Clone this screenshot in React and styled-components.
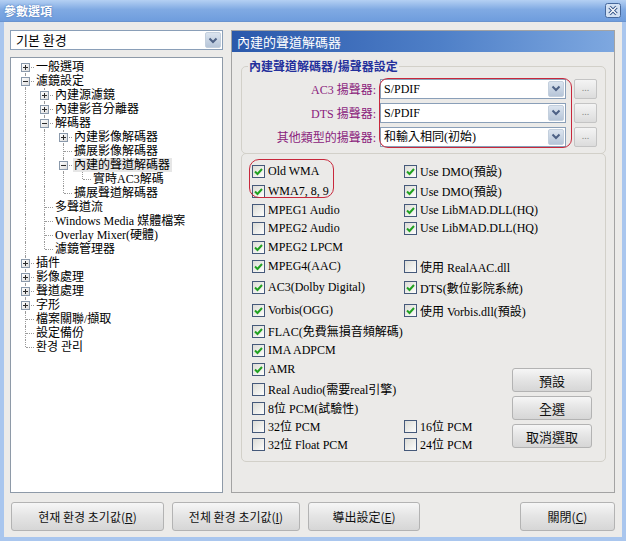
import React from 'react';
import styled, { createGlobalStyle } from 'styled-components';

const GlobalStyle = createGlobalStyle`
  html, body {
    margin: 0;
    padding: 0;
    background: #fff;
  }
  body {
    font-family: "Liberation Serif", "Noto Sans CJK TC", serif;
    font-size: 12px;
    color: #000;
  }
`;

const TREE = [
  { t: '一般選項', d: 0, exp: '+' },
  { t: '濾鏡設定', d: 0, exp: '-' },
  { t: '內建源濾鏡', d: 1, exp: '+' },
  { t: '內建影音分離器', d: 1, exp: '+' },
  { t: '解碼器', d: 1, exp: '-' },
  { t: '內建影像解碼器', d: 2, exp: '+' },
  { t: '擴展影像解碼器', d: 2 },
  { t: '內建的聲道解碼器', d: 2, exp: '-', sel: true },
  { t: '實時AC3解碼', d: 3 },
  { t: '擴展聲道解碼器', d: 2 },
  { t: '多聲道流', d: 1 },
  { t: 'Windows Media 媒體檔案', d: 1 },
  { t: 'Overlay Mixer(硬體)', d: 1 },
  { t: '濾鏡管理器', d: 1 },
  { t: '插件', d: 0, exp: '+' },
  { t: '影像處理', d: 0, exp: '+' },
  { t: '聲道處理', d: 0, exp: '+' },
  { t: '字形', d: 0, exp: '+' },
  { t: '檔案關聯/擷取', d: 0 },
  { t: '設定備份', d: 0 },
  { t: '환경 관리', d: 0 },
];

// left column, right column, row height
const CHECKS = [
  [{ t: 'Old  WMA', on: true }, { t: 'Use DMO(預設)', on: true }, 20],
  [{ t: 'WMA7, 8, 9', on: true }, { t: 'Use DMO(預設)', on: true }, 20],
  [{ t: 'MPEG1 Audio' }, { t: 'Use LibMAD.DLL(HQ)', on: true }, 18],
  [{ t: 'MPEG2 Audio' }, { t: 'Use LibMAD.DLL(HQ)', on: true }, 19],
  [{ t: 'MPEG2 LPCM', on: true }, null, 19],
  [{ t: 'MPEG4(AAC)', on: true }, { t: '使用 RealAAC.dll' }, 19],
  [{ t: 'AC3(Dolby Digital)', on: true }, { t: 'DTS(數位影院系統)', on: true }, 23],
  [{ t: 'Vorbis(OGG)', on: true }, { t: '使用 Vorbis.dll(預設)', on: true }, 23],
  [{ t: 'FLAC(免費無損音頻解碼)', on: true }, null, 18],
  [{ t: 'IMA ADPCM', on: true }, null, 20],
  [{ t: 'AMR', on: true }, null, 19],
  [{ t: 'Real Audio(需要real引擎)' }, null, 20],
  [{ t: '8位 PCM(試驗性)' }, null, 18],
  [{ t: '32位 PCM' }, { t: '16位 PCM' }, 18],
  [{ t: '32位 Float PCM' }, { t: '24位 PCM' }, 18],
];

const Window = styled.div`
  width: 626px;
  height: 541px;
  display: flex;
  flex-direction: column;
  background: #ecebe9;
  overflow: hidden;
`;

const TitleBar = styled.div`
  height: 22px;
  flex: none;
  display: flex;
  align-items: center;
  justify-content: space-between;
  padding: 0 5px 0 4px;
  background: linear-gradient(#b4d0f3, #80aae3 45%, #6f9ddd 100%);
  border-bottom: 1px solid #6a94cf;
  box-sizing: border-box;
`;

const Title = styled.span`
  font-family: "Noto Sans CJK TC", sans-serif;
  font-weight: bold;
  font-size: 12px;
  color: #fff;
  text-shadow: 0 0 2px #3d6aae;
`;

const Body = styled.div`
  flex: 1;
  display: flex;
  flex-direction: column;
  gap: 9px;
  padding: 8px 7px 6px 6px;
  border: 4px solid #a9c6ee;
  border-top: none;
`;

const Main = styled.div`
  height: 463px;
  display: flex;
  gap: 8px;
`;

const LeftCol = styled.div`
  width: 214px;
  display: flex;
  flex-direction: column;
  gap: 7px;
`;

const Combo = styled.div`
  height: 20px;
  width: ${p => p.$w || 'auto'};
  box-sizing: border-box;
  display: flex;
  align-items: center;
  background: #fff;
  border: 1px solid #8a9fb8;
  padding: 1px;
`;

const ComboText = styled.span`
  flex: 1;
  padding-left: ${p => p.$pad || 3}px;
  font-family: ${p => (p.$kr ? '"Noto Sans CJK KR", sans-serif' : 'inherit')};
  font-size: ${p => p.$size || 12}px;
  line-height: 16px;
  white-space: nowrap;
`;

const ArrowBtn = styled.span`
  width: 16px;
  height: 16px;
  flex: none;
  display: flex;
  align-items: center;
  justify-content: center;
  background: linear-gradient(#dbe4ef, #b6c5d8);
  border: 1px solid #c3cfdd;
  box-sizing: border-box;
  border-radius: 2px;
`;

const TreeBox = styled.div`
  flex: 1;
  background: #fff;
  border: 1px solid #8e9aa8;
  padding: 2px 0 0 5px;
  display: flex;
  flex-direction: column;
`;

const TreeRow = styled.div`
  height: 14px;
  display: flex;
  align-items: center;
  font-family: "Liberation Serif", "Noto Sans CJK TC", serif;
  font-size: 12px;
`;

const Guide = styled.span`
  position: relative;
  flex: none;
  width: 19px;
  height: 14px;
  &::before {
    content: '';
    display: ${p => (p.$up || p.$down ? 'block' : 'none')};
    position: absolute;
    left: 9px;
    top: ${p => (p.$up ? '0' : '7px')};
    bottom: ${p => (p.$down ? '0' : '7px')};
    border-left: 1px dotted #9a9a9a;
  }
  &::after {
    content: '';
    display: ${p => (p.$branch ? 'block' : 'none')};
    position: absolute;
    left: 10px;
    right: 1px;
    top: 7px;
    border-top: 1px dotted #9a9a9a;
  }
`;

const Expander = styled.span`
  position: absolute;
  left: 5px;
  top: 3px;
  width: 9px;
  height: 9px;
  box-sizing: border-box;
  border: 1px solid #8a99ab;
  background: linear-gradient(135deg, #fff, #dcdcdc);
  z-index: 1;
  display: flex;
`;

const TreeLabel = styled.span`
  padding: 0 2px 0 1px;
  line-height: 14px;
  white-space: nowrap;
  background: ${p => (p.$sel ? '#e6e6e6' : 'transparent')};
`;

const Panel = styled.div`
  flex: 1;
  display: flex;
  flex-direction: column;
  border: 1px solid #a3a3a3;
  background: #ebeae8;
`;

const PanelHeader = styled.div`
  height: 21px;
  flex: none;
  padding-left: 5px;
  line-height: 21px;
  color: #fff;
  font-family: "Noto Sans CJK TC", sans-serif;
  font-size: 13px;
  background: linear-gradient(90deg, #2a58ab, #4f80c8 55%, #7ea8e0);
`;

const PanelBody = styled.div`
  padding: 7px 8px 0 9px;
  display: flex;
  flex-direction: column;
`;

const Group = styled.fieldset`
  margin: 0;
  padding: 0 8px 7px 0;
  min-width: 0;
  border: 1px solid #d2d0c9;
  border-radius: 5px;
`;

const Legend = styled.legend`
  margin-left: 6px;
  padding: 0 1px;
  height: 14px;
  line-height: 14px;
  font-family: "Noto Sans CJK TC", sans-serif;
  font-weight: bold;
  font-size: 12px;
  color: #24309c;
`;

const SpeakerRows = styled.div`
  position: relative;
  margin-top: 6px;
  display: flex;
  flex-direction: column;
  gap: 5px;
`;

const SpeakerRow = styled.div`
  height: 19px;
  display: flex;
  align-items: center;
`;

const SpeakerLabel = styled.span`
  width: 134px;
  margin-right: 4px;
  text-align: right;
  color: #8a1c7c;
  white-space: nowrap;
`;

const DotsBtn = styled.span`
  margin-left: 8px;
  width: 23px;
  height: 20px;
  box-sizing: border-box;
  border: 1px solid #c4c4c4;
  border-radius: 2px;
  background: linear-gradient(#f4f4f4, #dcdcdc);
  color: #8a8a8a;
  font-size: 10px;
  line-height: 16px;
  text-align: center;
`;

const RedMark = styled.div`
  position: absolute;
  left: ${p => p.$x}px;
  top: ${p => p.$y}px;
  width: ${p => p.$w}px;
  height: ${p => p.$h}px;
  border: 1.5px solid #c8283c;
  border-radius: ${p => p.$r}px;
  pointer-events: none;
`;

const CheckGroup = styled.div`
  position: relative;
  margin-top: -1px;
  padding: 7px 0 8px 10px;
  border: 1px solid #d2d0c9;
  border-radius: 5px;
  display: flex;
`;

const CheckGrid = styled.div`
  display: flex;
  flex-direction: column;
`;

const CheckRow = styled.div`
  height: ${p => p.$h}px;
  display: flex;
  align-items: center;
`;

const CheckCell = styled.label`
  width: ${p => p.$w}px;
  display: flex;
  align-items: center;
  gap: 3px;
  white-space: nowrap;
`;

const Box = styled.span`
  width: 13px;
  height: 13px;
  flex: none;
  box-sizing: border-box;
  border: 1px solid #45597a;
  background: linear-gradient(135deg, #dcdcd6, #fdfdfc);
  display: flex;
  align-items: center;
  justify-content: center;
`;

const SideButtons = styled.div`
  align-self: flex-end;
  margin-bottom: 5px;
  display: flex;
  flex-direction: column;
  gap: 4px;
`;

const Button = styled.div`
  width: ${p => p.$w}px;
  height: ${p => p.$h}px;
  box-sizing: border-box;
  display: flex;
  align-items: center;
  justify-content: center;
  border: 1px solid #b3b3b3;
  border-radius: 3px;
  background: linear-gradient(#f6f6f6, #e4e4e4 50%, #d6d6d6);
  font-family: ${p => (p.$kr ? '"Noto Sans CJK KR", sans-serif' : '"Noto Sans CJK TC", sans-serif')};
  font-size: ${p => p.$size || 12}px;
  color: #111;
  white-space: nowrap;
`;

const ButtonBar = styled.div`
  display: flex;
  gap: 8px;
  padding-left: 1px;
`;

const Spacer = styled.span`
  flex: 1;
`;

function Chevron() {
  return (
    <svg width="10" height="7" viewBox="0 0 10 7">
      <path d="M1.5 1.5 L5 5 L8.5 1.5" fill="none" stroke="#4d6185" strokeWidth="2" />
    </svg>
  );
}

function CloseIcon() {
  return (
    <svg width="16" height="15" viewBox="0 0 16 15">
      <rect x="0.5" y="0.5" width="15" height="14" rx="2" fill="#d3e1f3" stroke="#46689c" />
      <path d="M4.5 4 L11.5 11 M11.5 4 L4.5 11" stroke="#35568a" strokeWidth="3.2" />
      <path d="M4.5 4 L11.5 11 M11.5 4 L4.5 11" stroke="#fff" strokeWidth="1.4" />
    </svg>
  );
}

function Sign({ minus }) {
  return (
    <svg width="7" height="7" viewBox="0 0 7 7">
      <path d="M1 3.5 H6" stroke="#2b2b2b" strokeWidth="1" />
      {!minus && <path d="M3.5 1 V6" stroke="#2b2b2b" strokeWidth="1" />}
    </svg>
  );
}

function Check({ on }) {
  return (
    <Box>
      {on && (
        <svg width="9" height="9" viewBox="0 0 9 9">
          <path d="M1 4.5 L3.5 7 L8 2" fill="none" stroke="#21a121" strokeWidth="2" />
        </svg>
      )}
    </Box>
  );
}

function Tree() {
  const hasNext = (i, level) => {
    for (let j = i + 1; j < TREE.length; j++) {
      if (TREE[j].d < level) return false;
      if (TREE[j].d === level) return true;
    }
    return false;
  };
  return (
    <TreeBox>
      {TREE.map((item, i) => {
        const guides = [];
        for (let l = 0; l < item.d; l++) {
          const c = hasNext(i, l);
          guides.push(<Guide key={l} $up={c} $down={c} />);
        }
        return (
          <TreeRow key={i}>
            {guides}
            <Guide $up={i > 0} $down={hasNext(i, item.d)} $branch>
              {item.exp && (
                <Expander>
                  <Sign minus={item.exp === '-'} />
                </Expander>
              )}
            </Guide>
            <TreeLabel $sel={item.sel}>{item.t}</TreeLabel>
          </TreeRow>
        );
      })}
    </TreeBox>
  );
}

const SPEAKERS = [
  ['AC3 揚聲器:', 'S/PDIF'],
  ['DTS 揚聲器:', 'S/PDIF'],
  ['其他類型的揚聲器:', '和輸入相同(初始)'],
];

export default function App() {
  return (
    <>
      <GlobalStyle />
      <Window>
        <TitleBar>
          <Title>參數選項</Title>
          <CloseIcon />
        </TitleBar>
        <Body>
          <Main>
            <LeftCol>
              <Combo>
                <ComboText $kr $size={13} $pad={4}>기본 환경</ComboText>
                <ArrowBtn>
                  <Chevron />
                </ArrowBtn>
              </Combo>
              <Tree />
            </LeftCol>
            <Panel>
              <PanelHeader>內建的聲道解碼器</PanelHeader>
              <PanelBody>
                <Group>
                  <Legend>內建聲道解碼器/揚聲器設定</Legend>
                  <SpeakerRows>
                    {SPEAKERS.map(([label, value]) => (
                      <SpeakerRow key={label}>
                        <SpeakerLabel>{label}</SpeakerLabel>
                        <Combo $w="186px">
                          <ComboText $pad={2}>{value}</ComboText>
                          <ArrowBtn>
                            <Chevron />
                          </ArrowBtn>
                        </Combo>
                        <DotsBtn>...</DotsBtn>
                      </SpeakerRow>
                    ))}
                    <RedMark $x={137} $y={-1} $w={191} $h={68} $r={9} />
                  </SpeakerRows>
                </Group>
                <CheckGroup>
                  <CheckGrid>
                    {CHECKS.map(([a, b, h], i) => (
                      <CheckRow key={i} $h={h}>
                        <CheckCell $w={152}>
                          <Check on={a.on} />
                          {a.t}
                        </CheckCell>
                        {b && (
                          <CheckCell $w={108}>
                            <Check on={b.on} />
                            {b.t}
                          </CheckCell>
                        )}
                      </CheckRow>
                    ))}
                  </CheckGrid>
                  <SideButtons>
                    <Button $w={80} $h={24} $size={13}>預設</Button>
                    <Button $w={80} $h={24} $size={13}>全選</Button>
                    <Button $w={80} $h={24} $size={13}>取消選取</Button>
                  </SideButtons>
                  <RedMark $x={7} $y={5} $w={83} $h={37} $r={10} />
                </CheckGroup>
              </PanelBody>
            </Panel>
          </Main>
          <ButtonBar>
            <Button $w={153} $h={29} $kr>현재 환경 초기값(<u>R</u>)</Button>
            <Button $w={128} $h={29} $kr>전체 환경 초기값(<u>I</u>)</Button>
            <Button $w={112} $h={29}>導出設定(<u>E</u>)</Button>
            <Spacer />
            <Button $w={95} $h={29}>關閉(<u>C</u>)</Button>
          </ButtonBar>
        </Body>
      </Window>
    </>
  );
}
